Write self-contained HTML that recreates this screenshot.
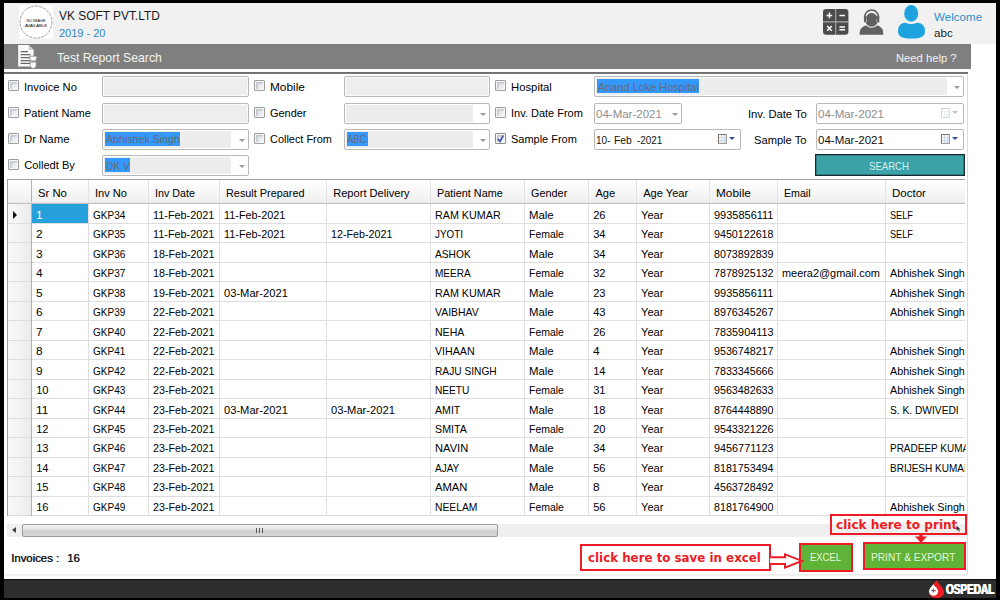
<!DOCTYPE html>
<html>
<head>
<meta charset="utf-8">
<title>Test Report Search</title>
<style>
*{box-sizing:border-box;margin:0;padding:0}
html,body{width:1000px;height:600px;overflow:hidden;background:#000}
body{position:relative;font-family:"Liberation Sans",sans-serif;font-size:12px;color:#111}
body div,body svg{position:absolute}
#win{left:4px;top:3px;width:992px;height:576px;background:#fff}
#hdr{left:4px;top:3px;width:992px;height:41px;background:#f1f1f1}
#logo{left:19px;top:5px;width:34px;height:34px;background:#fff}
#bar{left:4px;top:44px;width:967px;height:25px;background:#7f7f7f}
#barline{left:4px;top:72px;width:964px;height:2px;background:linear-gradient(#6c6c6c,#7c7c7c)}
#panelR{left:967px;top:74px;width:1px;height:501px;background:#dcdcdc}
#panelB{left:4px;top:574px;width:964px;height:2px;background:linear-gradient(#e9e9e9,#f6f6f6)}
.cb{width:11px;height:11px;border:1px solid #9d9d9d;border-radius:1px;background:linear-gradient(135deg,#d2d4d9 10%,#f4f4f4 80%);box-shadow:inset 0 0 0 1px #f6f6f6, inset 1.5px 1.5px 0 1px #c4c8d0}
.cb.chk{border-color:#8c8c8c;background:linear-gradient(135deg,#dcdde2,#f6f6f6)}
.t{white-space:pre;color:#000}
.inp{height:21px;border:1px solid #b9b9b9;border-radius:2px;background:#fff;font-size:12px;white-space:nowrap;overflow:hidden}
.inp.dis{background:#eeeeee;box-shadow:inset 0 0 0 1px #fafafa}
.inp .fill{left:1px;top:1px;bottom:1px;background:#ededed}
.inp .sel{left:2px;top:1.5px;height:14.5px;background:#3399ff}
.inp .arrow{right:3.5px;top:8.5px;width:0;height:0;border-left:3px solid transparent;border-right:3px solid transparent;border-top:3.5px solid #9a9a9a}
.inp .txt{left:3px;top:1px;line-height:18px}
.inp .txt.g{color:#8a8a8a}
#search{left:815px;top:154px;width:150px;height:21.5px;background:#3ba3a8;border:1px solid #18282c;box-shadow:inset 0 0 0 0.5px #245a60}
/* grid */
.gh{background:linear-gradient(#ffffff,#f7f7f7 50%,#efefef)}
.rh{background:linear-gradient(90deg,#f9f9f9,#ececec)}
.selc{background:#26a0da}
.ht{color:#000}
.hs{width:1px;background:#e2e2e2}
.hl{height:1px;background:#c2c2c2;box-shadow:0 -1px 0 #e6e6e6}
.rl{height:1px;background:#dedede}
.vl{width:1px;background:#dedede}
.vl.first{background:#b2b2b2}
.hs.first{background:#b2b2b2}
.ct{color:#000}
.ct.sel{color:#fff}
.mark{width:0;height:0;border-top:4px solid transparent;border-bottom:4px solid transparent;border-left:4px solid #111}
.gb{background:#a0a0a0}
/* bottom */
#sbar{left:7px;top:524px;width:958px;height:13px;background:#efefef}
#sthumb{left:22px;top:524px;width:476px;height:13px;border:1px solid #9c9c9c;border-radius:2px;background:linear-gradient(#f1f1f1,#e3e3e3 46%,#cccccc 54%,#d8d8d8)}
#sgrip{left:256px;top:528px;width:7px;height:5px;background:repeating-linear-gradient(90deg,#555 0,#555 1px,transparent 1px,transparent 3px)}
#sarrow{left:12px;top:527px;width:0;height:0;border-top:3px solid transparent;border-bottom:3px solid transparent;border-right:4px solid #444}
.rbox{border:2.5px solid #ee1c25}
.gbtn{background:#5fb336;border:2.5px solid #ee1c25}
#foot{left:4px;top:579px;width:992px;height:19px;background:#2d2d2d;border-top:1px solid #0c0c0c}
#osp{left:946px;top:580px;font-size:14.6px;line-height:18px;font-weight:bold;color:#fff;white-space:nowrap;transform-origin:0 0;transform:scaleX(0.685);text-shadow:0.6px 0 0 #fff,-0.6px 0 0 #fff}
.cal{right:13px;top:3.6px;width:9.5px;height:10px;border:1px solid #7a726e;border-right-color:#a09a98;border-bottom-color:#a09a98;border-radius:1px;background:linear-gradient(90deg,transparent 2.4px,#d0d9e6 2.4px,#d0d9e6 3.2px,transparent 3.2px,transparent 5px,#d0d9e6 5px,#d0d9e6 5.8px,transparent 5.8px),linear-gradient(180deg,transparent 2.2px,#d0d9e6 2.2px,#d0d9e6 3px,transparent 3px,transparent 5px,#d0d9e6 5px,#d0d9e6 5.8px,transparent 5.8px),linear-gradient(135deg,#ffffff 30%,#d4e2f4)}
.cal.dim{opacity:.32}
.inp .arrow.bl{border-top-color:#2f4c90;border-left-width:3.2px;border-right-width:3.2px;border-top-width:3.8px;top:7.2px}
.inp .arrow.lt{border-top-color:#c0c0c0;border-left-width:3.2px;border-right-width:3.2px;border-top-width:3.8px;top:7.2px}
.t{transform-origin:0 0}
</style>
</head>
<body>
<div id="win"></div>
<div id="hdr"></div>
<div id="logo"></div>
<svg id="logoc" style="left:19px;top:5px" width="34" height="34" viewBox="0 0 34 34"><circle cx="17" cy="17.1" r="16" fill="none" stroke="#555" stroke-width="0.55" stroke-dasharray="3.2 0.9"/><text x="17" y="17.2" font-family="Liberation Sans, sans-serif" font-size="3.8" text-anchor="middle" fill="#000" textLength="19" lengthAdjust="spacingAndGlyphs">NO IMAGE</text><text x="17" y="21.6" font-family="Liberation Sans, sans-serif" font-size="3.8" text-anchor="middle" fill="#000" textLength="22" lengthAdjust="spacingAndGlyphs">AVAILABLE</text></svg>
<svg id="calc" style="left:823px;top:9px" width="26" height="26" viewBox="0 0 26 26"><rect x="0" y="0" width="25.4" height="25.8" rx="3.2" fill="#4b4b4b"/><path d="M12.7 0 V25.8 M0 12.9 H25.4" stroke="#a9a9a9" stroke-width="1.1"/><path d="M3.6 6.4 H9.2 M6.4 3.6 V9.2 M16.4 6.4 H22 M4.1 16.9 L8.7 21.7 M8.7 16.9 L4.1 21.7 M16.4 17.9 H22 M16.4 20.7 H22" stroke="#fff" stroke-width="1.5" fill="none"/></svg>
<svg id="headset" style="left:858px;top:8px" width="28" height="28" viewBox="0 0 28 28"><path d="M1.5 26.7 Q1.2 19.4 8.6 17.1 L11 16 H16.4 L18.8 17.1 Q25.8 19.4 25.3 26.7 Z" fill="#5f6160"/><path d="M6.9 12.6 A6.7 6.7 0 0 0 20.3 12.6 Z" fill="#5f6160" stroke="#f1f1f1" stroke-width="1.1"/><ellipse cx="13.6" cy="10" rx="5.5" ry="5.6" fill="#5f6160"/><path d="M8.6 7.6 A5.5 5.5 0 0 1 18.6 7.6" fill="none" stroke="#f1f1f1" stroke-width="0.9"/><path d="M7.1 11 A6.85 6.85 0 1 1 20.1 11" fill="none" stroke="#5f6160" stroke-width="1.5"/><rect x="5.9" y="7.6" width="2.1" height="6.6" rx="1" fill="#5f6160"/><rect x="19.1" y="7.6" width="2.2" height="6.8" rx="1" fill="#5f6160"/></svg>
<svg id="user" style="left:897px;top:4px" width="30" height="36" viewBox="0 0 30 36"><ellipse cx="14.2" cy="9.4" rx="7" ry="8.4" fill="#1fa3df"/><path d="M1 27.4 Q1 19 8.6 18.8 Q14.2 21.4 19.8 18.8 Q28 19 28 27.4 Q28 34.6 14.4 34.6 Q1 34.6 1 27.4 Z" fill="#1fa3df"/></svg>
<div class="t" style="left:59.3px;top:8.67px;font-size:12.2px;line-height:15px;transform:scaleX(0.9770);color:#1a1a1a;">VK SOFT PVT.LTD</div>
<div class="t" style="left:58.9px;top:26.16px;font-size:10.8px;line-height:14px;transform:scaleX(1.0189);color:#2e86c1;">2019 - 20</div>
<div class="t" style="left:934.3px;top:10.15px;font-size:11.1px;line-height:14px;transform:scaleX(1.0443);color:#2f8fc8;">Welcome</div>
<div class="t" style="left:934.3px;top:25.75px;font-size:11.1px;line-height:14px;transform:scaleX(1.0449);color:#222;">abc</div>
<div id="bar"></div>
<svg id="docico" style="left:17px;top:44px" width="22" height="26" viewBox="0 0 22 26"><path d="M1.2 1 H11.6 L16.6 6 V22.6 H1.2 Z" fill="#fafafa"/><path d="M11.6 1 V6 H16.6 Z" fill="#cfcfcf"/><path d="M3.6 7.6 H11 M3.6 10.6 H13.6 M3.6 13.6 H13.6 M3.6 16.6 H13.6 M3.6 19.4 H13.6" stroke="#6a6a6a" stroke-width="1.3"/><path d="M12.4 12.2 H20 V14.2 H19.2 V21.2 Q19.2 24.4 16.2 24.4 Q13.2 24.4 13.2 21.2 V14.2 H12.4 Z" fill="#fafafa" stroke="#7f7f7f" stroke-width="0.7"/><rect x="13.4" y="16.4" width="5.6" height="2.2" fill="#9a9a9a"/></svg>
<div class="t" style="left:57.3px;top:49.63px;font-size:12.6px;line-height:16px;transform:scaleX(0.9726);color:#f4f4f4;">Test Report Search</div>
<div class="t" style="left:896.3px;top:50.95px;font-size:11.1px;line-height:14px;transform:scaleX(1.0106);color:#f4f4f4;">Need help ?</div>
<div id="barline"></div>
<div id="panelR"></div>
<div id="panelB"></div>

<!-- filter col 1 -->
<div class="cb" style="left:8px;top:80px"></div><div class="t" style="left:24.3px;top:80.15px;font-size:11.1px;line-height:14px;transform:scaleX(1.0087);">Invoice No</div>
<div class="inp dis" style="left:102px;top:76px;width:147px"></div>
<div class="cb" style="left:8px;top:107px"></div><div class="t" style="left:24.3px;top:106.15px;font-size:11.1px;line-height:14px;transform:scaleX(0.9948);">Patient Name</div>
<div class="inp dis" style="left:102px;top:103px;width:147px"></div>
<div class="cb" style="left:8px;top:133px"></div><div class="t" style="left:24.3px;top:132.15px;font-size:11.1px;line-height:14px;transform:scaleX(1.0246);">Dr Name</div>
<div class="inp" style="left:102px;top:129px;width:147px"><div class="fill" style="width:127px"></div><div class="sel" style="width:75px"></div><div class="arrow"></div></div>
<div class="t" style="left:106.3px;top:132.15px;font-size:11.1px;line-height:14px;transform:scaleX(0.9580);color:#666a72;">Abhishek Singh</div>
<div class="cb" style="left:8px;top:159px"></div><div class="t" style="left:24.3px;top:158.15px;font-size:11.1px;line-height:14px;">Colledt By</div>
<div class="inp" style="left:102px;top:155px;width:147px"><div class="fill" style="width:127px"></div><div class="sel" style="width:25px"></div><div class="arrow"></div></div>
<div class="t" style="left:106.3px;top:158.55px;font-size:11.1px;line-height:14px;transform:scaleX(0.9225);color:#666a72;">DK V</div>

<!-- filter col 2 -->
<div class="cb" style="left:254px;top:80px"></div><div class="t" style="left:270.3px;top:80.15px;font-size:11.1px;line-height:14px;transform:scaleX(1.0673);">Mobile</div>
<div class="inp dis" style="left:344px;top:76px;width:146px"></div>
<div class="cb" style="left:254px;top:107px"></div><div class="t" style="left:270.3px;top:106.15px;font-size:11.1px;line-height:14px;transform:scaleX(0.9859);">Gender</div>
<div class="inp" style="left:344px;top:103px;width:146px"><div class="fill" style="width:127px"></div><div class="arrow"></div></div>
<div class="cb" style="left:254px;top:133px"></div><div class="t" style="left:270.3px;top:132.15px;font-size:11.1px;line-height:14px;transform:scaleX(0.9840);">Collect From</div>
<div class="inp" style="left:344px;top:129px;width:146px"><div class="fill" style="width:127px"></div><div class="sel" style="width:21px"></div><div class="arrow"></div></div>
<div class="t" style="left:347.3px;top:132.15px;font-size:11.1px;line-height:14px;transform:scaleX(0.8456);color:#666a72;">ABC</div>

<!-- filter col 3 -->
<div class="cb" style="left:495px;top:80px"></div><div class="t" style="left:511.3px;top:80.15px;font-size:11.1px;line-height:14px;transform:scaleX(1.0199);">Hospital</div>
<div class="inp" style="left:594px;top:76px;width:370px"><div class="fill" style="width:351px"></div><div class="sel" style="width:102px"></div><div class="arrow"></div></div>
<div class="t" style="left:598.3px;top:80.15px;font-size:11.1px;line-height:14px;transform:scaleX(0.9850);color:#666a72;">Anand Loke Hospital</div>
<div class="cb" style="left:495px;top:107px"></div><div class="t" style="left:511.3px;top:106.15px;font-size:11.1px;line-height:14px;transform:scaleX(0.9907);">Inv. Date From</div>
<div class="inp" style="left:594px;top:103px;width:88px"><div class="arrow" style="right:3px"></div></div>
<div class="t" style="left:596.3px;top:107.15px;font-size:11.1px;line-height:14px;transform:scaleX(1.0370);color:#8c8c8c;">04-Mar-2021</div>
<div class="t" style="left:748.3px;top:107.15px;font-size:11.1px;line-height:14px;transform:scaleX(1.0119);">Inv. Date To</div>
<div class="inp" style="left:816px;top:103px;width:148px"><div class="cal dim"></div><div class="arrow lt" style="right:5px"></div></div>
<div class="t" style="left:818.3px;top:107.15px;font-size:11.1px;line-height:14px;transform:scaleX(1.0370);color:#8c8c8c;">04-Mar-2021</div>
<div class="cb chk" style="left:495px;top:133px"></div><svg style="left:495px;top:133px" width="12" height="12" viewBox="0 0 12 12"><path d="M2.8 6 L5 8.4 L8.3 2.5" fill="none" stroke="#3a55a8" stroke-width="1.7"/></svg><div class="t" style="left:511.3px;top:132.15px;font-size:11.1px;line-height:14px;transform:scaleX(0.9892);">Sample From</div>
<div class="inp" style="left:594px;top:129px;width:147px"><div class="cal"></div><div class="arrow bl" style="right:5px"></div></div>
<div class="t" style="left:596.3px;top:133.15px;font-size:11.1px;line-height:14px;transform:scaleX(0.9038);color:#111;">10-</div><div class="t" style="left:614.3px;top:133.15px;font-size:11.1px;line-height:14px;transform:scaleX(0.9358);color:#111;">Feb</div><div class="t" style="left:636.8px;top:133.15px;font-size:11.1px;line-height:14px;transform:scaleX(0.8947);color:#111;">-2021</div>
<div class="t" style="left:754.3px;top:133.15px;font-size:11.1px;line-height:14px;transform:scaleX(1.0049);">Sample To</div>
<div class="inp" style="left:816px;top:129px;width:148px"><div class="cal"></div><div class="arrow bl" style="right:5px"></div></div>
<div class="t" style="left:818.3px;top:133.15px;font-size:11.1px;line-height:14px;transform:scaleX(1.0370);color:#111;">04-Mar-2021</div>
<div id="search"></div>
<div class="t" style="left:869.3px;top:158.75px;font-size:11.1px;line-height:14px;transform:scaleX(0.8625);color:#d6eeee;">SEARCH</div>
<div id="grid">
<div class="gh" style="left:8px;top:180px;width:957px;height:23px"></div>
<div class="rh" style="left:8px;top:203px;width:23px;height:312px"></div>
<div class="selc" style="left:32px;top:204px;width:56px;height:19px"></div>
<div class="t ht" style="left:38.4px;top:186.15px;font-size:11.1px;line-height:14px;transform:scaleX(1.0185);">Sr No</div>
<div class="t ht" style="left:94.9px;top:186.15px;font-size:11.1px;line-height:14px;">Inv No</div>
<div class="t ht" style="left:155.2px;top:186.15px;font-size:11.1px;line-height:14px;transform:scaleX(0.9652);">Inv Date</div>
<div class="t ht" style="left:226.2px;top:186.15px;font-size:11.1px;line-height:14px;transform:scaleX(0.9787);">Result Prepared</div>
<div class="t ht" style="left:333.2px;top:186.15px;font-size:11.1px;line-height:14px;">Report Delivery</div>
<div class="t ht" style="left:437.2px;top:186.15px;font-size:11.1px;line-height:14px;transform:scaleX(0.9799);">Patient Name</div>
<div class="t ht" style="left:531.2px;top:186.15px;font-size:11.1px;line-height:14px;transform:scaleX(0.9805);">Gender</div>
<div class="t ht" style="left:595.4px;top:186.15px;font-size:11.1px;line-height:14px;">Age</div>
<div class="t ht" style="left:643.2px;top:186.15px;font-size:11.1px;line-height:14px;">Age Year</div>
<div class="t ht" style="left:715.8px;top:186.15px;font-size:11.1px;line-height:14px;transform:scaleX(1.0673);">Mobile</div>
<div class="t ht" style="left:784.4px;top:186.15px;font-size:11.1px;line-height:14px;transform:scaleX(0.9547);">Email</div>
<div class="t ht" style="left:892.4px;top:186.15px;font-size:11.1px;line-height:14px;transform:scaleX(1.0369);">Doctor</div>
<div class="hs first" style="left:31px;top:180px;height:23px"></div>
<div class="hs" style="left:88px;top:180px;height:23px"></div>
<div class="hs" style="left:148px;top:180px;height:23px"></div>
<div class="hs" style="left:219px;top:180px;height:23px"></div>
<div class="hs" style="left:326px;top:180px;height:23px"></div>
<div class="hs" style="left:430px;top:180px;height:23px"></div>
<div class="hs" style="left:524px;top:180px;height:23px"></div>
<div class="hs" style="left:588px;top:180px;height:23px"></div>
<div class="hs" style="left:636px;top:180px;height:23px"></div>
<div class="hs" style="left:709px;top:180px;height:23px"></div>
<div class="hs" style="left:777px;top:180px;height:23px"></div>
<div class="hs" style="left:885px;top:180px;height:23px"></div>
<div class="hl" style="left:8px;top:203px;width:957px"></div>
<div class="rl" style="left:8px;top:223px;width:957px"></div>
<div class="t ct sel" style="left:36.2px;top:208.15px;font-size:11.1px;line-height:14px;transform:scaleX(1.0689);">1</div>
<div class="t ct" style="left:93px;top:208.15px;font-size:11.1px;line-height:14px;transform:scaleX(0.9025);">GKP34</div>
<div class="t ct" style="left:153px;top:208.15px;font-size:11.1px;line-height:14px;transform:scaleX(0.9787);">11-Feb-2021</div>
<div class="t ct" style="left:224px;top:208.15px;font-size:11.1px;line-height:14px;transform:scaleX(0.9787);">11-Feb-2021</div>
<div class="t ct" style="left:435px;top:208.15px;font-size:11.1px;line-height:14px;transform:scaleX(0.9685);">RAM KUMAR</div>
<div class="t ct" style="left:529px;top:208.15px;font-size:11.1px;line-height:14px;transform:scaleX(1.0266);">Male</div>
<div class="t ct" style="left:593.2px;top:208.15px;font-size:11.1px;line-height:14px;">26</div>
<div class="t ct" style="left:641px;top:208.15px;font-size:11.1px;line-height:14px;">Year</div>
<div class="t ct" style="left:713.6px;top:208.15px;font-size:11.1px;line-height:14px;transform:scaleX(0.9903);">9935856111</div>
<div class="t ct" style="left:890.2px;top:208.15px;font-size:11.1px;line-height:14px;transform:scaleX(0.8249);width:91.0px;overflow:hidden;">SELF</div>
<div class="rl" style="left:8px;top:242px;width:957px"></div>
<div class="t ct" style="left:36.2px;top:227.15px;font-size:11.1px;line-height:14px;transform:scaleX(1.0689);">2</div>
<div class="t ct" style="left:93px;top:227.15px;font-size:11.1px;line-height:14px;transform:scaleX(0.9025);">GKP35</div>
<div class="t ct" style="left:153px;top:227.15px;font-size:11.1px;line-height:14px;transform:scaleX(0.9787);">11-Feb-2021</div>
<div class="t ct" style="left:224px;top:227.15px;font-size:11.1px;line-height:14px;transform:scaleX(0.9787);">11-Feb-2021</div>
<div class="t ct" style="left:331px;top:227.15px;font-size:11.1px;line-height:14px;transform:scaleX(0.9660);">12-Feb-2021</div>
<div class="t ct" style="left:435px;top:227.15px;font-size:11.1px;line-height:14px;transform:scaleX(0.8870);">JYOTI</div>
<div class="t ct" style="left:529px;top:227.15px;font-size:11.1px;line-height:14px;transform:scaleX(0.9429);">Female</div>
<div class="t ct" style="left:593.2px;top:227.15px;font-size:11.1px;line-height:14px;">34</div>
<div class="t ct" style="left:641px;top:227.15px;font-size:11.1px;line-height:14px;">Year</div>
<div class="t ct" style="left:713.6px;top:227.15px;font-size:11.1px;line-height:14px;transform:scaleX(0.9638);">9450122618</div>
<div class="t ct" style="left:890.2px;top:227.15px;font-size:11.1px;line-height:14px;transform:scaleX(0.8249);width:91.0px;overflow:hidden;">SELF</div>
<div class="rl" style="left:8px;top:262px;width:957px"></div>
<div class="t ct" style="left:36.2px;top:247.15px;font-size:11.1px;line-height:14px;transform:scaleX(1.0689);">3</div>
<div class="t ct" style="left:93px;top:247.15px;font-size:11.1px;line-height:14px;transform:scaleX(0.9025);">GKP36</div>
<div class="t ct" style="left:153px;top:247.15px;font-size:11.1px;line-height:14px;transform:scaleX(0.9660);">18-Feb-2021</div>
<div class="t ct" style="left:435px;top:247.15px;font-size:11.1px;line-height:14px;transform:scaleX(0.9186);">ASHOK</div>
<div class="t ct" style="left:529px;top:247.15px;font-size:11.1px;line-height:14px;transform:scaleX(1.0266);">Male</div>
<div class="t ct" style="left:593.2px;top:247.15px;font-size:11.1px;line-height:14px;">34</div>
<div class="t ct" style="left:641px;top:247.15px;font-size:11.1px;line-height:14px;">Year</div>
<div class="t ct" style="left:713.6px;top:247.15px;font-size:11.1px;line-height:14px;transform:scaleX(0.9638);">8073892839</div>
<div class="rl" style="left:8px;top:281px;width:957px"></div>
<div class="t ct" style="left:36.2px;top:266.15px;font-size:11.1px;line-height:14px;transform:scaleX(1.0689);">4</div>
<div class="t ct" style="left:93px;top:266.15px;font-size:11.1px;line-height:14px;transform:scaleX(0.9025);">GKP37</div>
<div class="t ct" style="left:153px;top:266.15px;font-size:11.1px;line-height:14px;transform:scaleX(0.9660);">18-Feb-2021</div>
<div class="t ct" style="left:435px;top:266.15px;font-size:11.1px;line-height:14px;transform:scaleX(0.9044);">MEERA</div>
<div class="t ct" style="left:529px;top:266.15px;font-size:11.1px;line-height:14px;transform:scaleX(0.9429);">Female</div>
<div class="t ct" style="left:593.2px;top:266.15px;font-size:11.1px;line-height:14px;">32</div>
<div class="t ct" style="left:641px;top:266.15px;font-size:11.1px;line-height:14px;">Year</div>
<div class="t ct" style="left:713.6px;top:266.15px;font-size:11.1px;line-height:14px;transform:scaleX(0.9638);">7878925132</div>
<div class="t ct" style="left:782.2px;top:266.15px;font-size:11.1px;line-height:14px;transform:scaleX(0.9841);">meera2@gmail.com</div>
<div class="t ct" style="left:890.2px;top:266.15px;font-size:11.1px;line-height:14px;transform:scaleX(0.9710);width:77.3px;overflow:hidden;">Abhishek Singh</div>
<div class="rl" style="left:8px;top:301px;width:957px"></div>
<div class="t ct" style="left:36.2px;top:286.15px;font-size:11.1px;line-height:14px;transform:scaleX(1.0689);">5</div>
<div class="t ct" style="left:93px;top:286.15px;font-size:11.1px;line-height:14px;transform:scaleX(0.9025);">GKP38</div>
<div class="t ct" style="left:153px;top:286.15px;font-size:11.1px;line-height:14px;transform:scaleX(0.9660);">19-Feb-2021</div>
<div class="t ct" style="left:224px;top:286.15px;font-size:11.1px;line-height:14px;transform:scaleX(1.0055);">03-Mar-2021</div>
<div class="t ct" style="left:435px;top:286.15px;font-size:11.1px;line-height:14px;transform:scaleX(0.9685);">RAM KUMAR</div>
<div class="t ct" style="left:529px;top:286.15px;font-size:11.1px;line-height:14px;transform:scaleX(1.0266);">Male</div>
<div class="t ct" style="left:593.2px;top:286.15px;font-size:11.1px;line-height:14px;">23</div>
<div class="t ct" style="left:641px;top:286.15px;font-size:11.1px;line-height:14px;">Year</div>
<div class="t ct" style="left:713.6px;top:286.15px;font-size:11.1px;line-height:14px;transform:scaleX(0.9903);">9935856111</div>
<div class="t ct" style="left:890.2px;top:286.15px;font-size:11.1px;line-height:14px;transform:scaleX(0.9710);width:77.3px;overflow:hidden;">Abhishek Singh</div>
<div class="rl" style="left:8px;top:320px;width:957px"></div>
<div class="t ct" style="left:36.2px;top:305.15px;font-size:11.1px;line-height:14px;transform:scaleX(1.0689);">6</div>
<div class="t ct" style="left:93px;top:305.15px;font-size:11.1px;line-height:14px;transform:scaleX(0.9025);">GKP39</div>
<div class="t ct" style="left:153px;top:305.15px;font-size:11.1px;line-height:14px;transform:scaleX(0.9660);">22-Feb-2021</div>
<div class="t ct" style="left:435px;top:305.15px;font-size:11.1px;line-height:14px;transform:scaleX(0.9404);">VAIBHAV</div>
<div class="t ct" style="left:529px;top:305.15px;font-size:11.1px;line-height:14px;transform:scaleX(1.0266);">Male</div>
<div class="t ct" style="left:593.2px;top:305.15px;font-size:11.1px;line-height:14px;">43</div>
<div class="t ct" style="left:641px;top:305.15px;font-size:11.1px;line-height:14px;">Year</div>
<div class="t ct" style="left:713.6px;top:305.15px;font-size:11.1px;line-height:14px;transform:scaleX(0.9638);">8976345267</div>
<div class="t ct" style="left:890.2px;top:305.15px;font-size:11.1px;line-height:14px;transform:scaleX(0.9710);width:77.3px;overflow:hidden;">Abhishek Singh</div>
<div class="rl" style="left:8px;top:340px;width:957px"></div>
<div class="t ct" style="left:36.2px;top:325.15px;font-size:11.1px;line-height:14px;transform:scaleX(1.0689);">7</div>
<div class="t ct" style="left:93px;top:325.15px;font-size:11.1px;line-height:14px;transform:scaleX(0.9025);">GKP40</div>
<div class="t ct" style="left:153px;top:325.15px;font-size:11.1px;line-height:14px;transform:scaleX(0.9660);">22-Feb-2021</div>
<div class="t ct" style="left:435px;top:325.15px;font-size:11.1px;line-height:14px;transform:scaleX(0.9500);">NEHA</div>
<div class="t ct" style="left:529px;top:325.15px;font-size:11.1px;line-height:14px;transform:scaleX(0.9429);">Female</div>
<div class="t ct" style="left:593.2px;top:325.15px;font-size:11.1px;line-height:14px;">26</div>
<div class="t ct" style="left:641px;top:325.15px;font-size:11.1px;line-height:14px;">Year</div>
<div class="t ct" style="left:713.6px;top:325.15px;font-size:11.1px;line-height:14px;transform:scaleX(0.9769);">7835904113</div>
<div class="rl" style="left:8px;top:359px;width:957px"></div>
<div class="t ct" style="left:36.2px;top:344.15px;font-size:11.1px;line-height:14px;transform:scaleX(1.0689);">8</div>
<div class="t ct" style="left:93px;top:344.15px;font-size:11.1px;line-height:14px;transform:scaleX(0.9025);">GKP41</div>
<div class="t ct" style="left:153px;top:344.15px;font-size:11.1px;line-height:14px;transform:scaleX(0.9660);">22-Feb-2021</div>
<div class="t ct" style="left:435px;top:344.15px;font-size:11.1px;line-height:14px;transform:scaleX(0.9606);">VIHAAN</div>
<div class="t ct" style="left:529px;top:344.15px;font-size:11.1px;line-height:14px;transform:scaleX(1.0266);">Male</div>
<div class="t ct" style="left:593.2px;top:344.15px;font-size:11.1px;line-height:14px;transform:scaleX(1.0689);">4</div>
<div class="t ct" style="left:641px;top:344.15px;font-size:11.1px;line-height:14px;">Year</div>
<div class="t ct" style="left:713.6px;top:344.15px;font-size:11.1px;line-height:14px;transform:scaleX(0.9638);">9536748217</div>
<div class="t ct" style="left:890.2px;top:344.15px;font-size:11.1px;line-height:14px;transform:scaleX(0.9710);width:77.3px;overflow:hidden;">Abhishek Singh</div>
<div class="rl" style="left:8px;top:379px;width:957px"></div>
<div class="t ct" style="left:36.2px;top:364.15px;font-size:11.1px;line-height:14px;transform:scaleX(1.0689);">9</div>
<div class="t ct" style="left:93px;top:364.15px;font-size:11.1px;line-height:14px;transform:scaleX(0.9025);">GKP42</div>
<div class="t ct" style="left:153px;top:364.15px;font-size:11.1px;line-height:14px;transform:scaleX(0.9660);">22-Feb-2021</div>
<div class="t ct" style="left:435px;top:364.15px;font-size:11.1px;line-height:14px;transform:scaleX(0.9178);">RAJU SINGH</div>
<div class="t ct" style="left:529px;top:364.15px;font-size:11.1px;line-height:14px;transform:scaleX(1.0266);">Male</div>
<div class="t ct" style="left:593.2px;top:364.15px;font-size:11.1px;line-height:14px;">14</div>
<div class="t ct" style="left:641px;top:364.15px;font-size:11.1px;line-height:14px;">Year</div>
<div class="t ct" style="left:713.6px;top:364.15px;font-size:11.1px;line-height:14px;transform:scaleX(0.9638);">7833345666</div>
<div class="t ct" style="left:890.2px;top:364.15px;font-size:11.1px;line-height:14px;transform:scaleX(0.9710);width:77.3px;overflow:hidden;">Abhishek Singh</div>
<div class="rl" style="left:8px;top:398px;width:957px"></div>
<div class="t ct" style="left:36.2px;top:383.15px;font-size:11.1px;line-height:14px;">10</div>
<div class="t ct" style="left:93px;top:383.15px;font-size:11.1px;line-height:14px;transform:scaleX(0.9025);">GKP43</div>
<div class="t ct" style="left:153px;top:383.15px;font-size:11.1px;line-height:14px;transform:scaleX(0.9660);">23-Feb-2021</div>
<div class="t ct" style="left:435px;top:383.15px;font-size:11.1px;line-height:14px;transform:scaleX(0.9117);">NEETU</div>
<div class="t ct" style="left:529px;top:383.15px;font-size:11.1px;line-height:14px;transform:scaleX(0.9429);">Female</div>
<div class="t ct" style="left:593.2px;top:383.15px;font-size:11.1px;line-height:14px;">31</div>
<div class="t ct" style="left:641px;top:383.15px;font-size:11.1px;line-height:14px;">Year</div>
<div class="t ct" style="left:713.6px;top:383.15px;font-size:11.1px;line-height:14px;transform:scaleX(0.9638);">9563482633</div>
<div class="t ct" style="left:890.2px;top:383.15px;font-size:11.1px;line-height:14px;transform:scaleX(0.9710);width:77.3px;overflow:hidden;">Abhishek Singh</div>
<div class="rl" style="left:8px;top:418px;width:957px"></div>
<div class="t ct" style="left:36.2px;top:403.15px;font-size:11.1px;line-height:14px;transform:scaleX(1.0674);">11</div>
<div class="t ct" style="left:93px;top:403.15px;font-size:11.1px;line-height:14px;transform:scaleX(0.9025);">GKP44</div>
<div class="t ct" style="left:153px;top:403.15px;font-size:11.1px;line-height:14px;transform:scaleX(0.9660);">23-Feb-2021</div>
<div class="t ct" style="left:224px;top:403.15px;font-size:11.1px;line-height:14px;transform:scaleX(1.0055);">03-Mar-2021</div>
<div class="t ct" style="left:331px;top:403.15px;font-size:11.1px;line-height:14px;transform:scaleX(1.0055);">03-Mar-2021</div>
<div class="t ct" style="left:435px;top:403.15px;font-size:11.1px;line-height:14px;transform:scaleX(0.9542);">AMIT</div>
<div class="t ct" style="left:529px;top:403.15px;font-size:11.1px;line-height:14px;transform:scaleX(1.0266);">Male</div>
<div class="t ct" style="left:593.2px;top:403.15px;font-size:11.1px;line-height:14px;">18</div>
<div class="t ct" style="left:641px;top:403.15px;font-size:11.1px;line-height:14px;">Year</div>
<div class="t ct" style="left:713.6px;top:403.15px;font-size:11.1px;line-height:14px;transform:scaleX(0.9638);">8764448890</div>
<div class="t ct" style="left:890.2px;top:403.15px;font-size:11.1px;line-height:14px;transform:scaleX(0.9206);width:81.6px;overflow:hidden;">S. K. DWIVEDI</div>
<div class="rl" style="left:8px;top:437px;width:957px"></div>
<div class="t ct" style="left:36.2px;top:422.15px;font-size:11.1px;line-height:14px;">12</div>
<div class="t ct" style="left:93px;top:422.15px;font-size:11.1px;line-height:14px;transform:scaleX(0.9025);">GKP45</div>
<div class="t ct" style="left:153px;top:422.15px;font-size:11.1px;line-height:14px;transform:scaleX(0.9660);">23-Feb-2021</div>
<div class="t ct" style="left:435px;top:422.15px;font-size:11.1px;line-height:14px;transform:scaleX(0.9639);">SMITA</div>
<div class="t ct" style="left:529px;top:422.15px;font-size:11.1px;line-height:14px;transform:scaleX(0.9429);">Female</div>
<div class="t ct" style="left:593.2px;top:422.15px;font-size:11.1px;line-height:14px;">20</div>
<div class="t ct" style="left:641px;top:422.15px;font-size:11.1px;line-height:14px;">Year</div>
<div class="t ct" style="left:713.6px;top:422.15px;font-size:11.1px;line-height:14px;transform:scaleX(0.9638);">9543321226</div>
<div class="rl" style="left:8px;top:457px;width:957px"></div>
<div class="t ct" style="left:36.2px;top:441.15px;font-size:11.1px;line-height:14px;">13</div>
<div class="t ct" style="left:93px;top:441.15px;font-size:11.1px;line-height:14px;transform:scaleX(0.9025);">GKP46</div>
<div class="t ct" style="left:153px;top:441.15px;font-size:11.1px;line-height:14px;transform:scaleX(0.9660);">23-Feb-2021</div>
<div class="t ct" style="left:435px;top:441.15px;font-size:11.1px;line-height:14px;transform:scaleX(1.0060);">NAVIN</div>
<div class="t ct" style="left:529px;top:441.15px;font-size:11.1px;line-height:14px;transform:scaleX(1.0266);">Male</div>
<div class="t ct" style="left:593.2px;top:441.15px;font-size:11.1px;line-height:14px;">34</div>
<div class="t ct" style="left:641px;top:441.15px;font-size:11.1px;line-height:14px;">Year</div>
<div class="t ct" style="left:713.6px;top:441.15px;font-size:11.1px;line-height:14px;transform:scaleX(0.9769);">9456771123</div>
<div class="t ct" style="left:890.2px;top:441.15px;font-size:11.1px;line-height:14px;transform:scaleX(0.8998);width:83.5px;overflow:hidden;">PRADEEP KUMAR</div>
<div class="rl" style="left:8px;top:476px;width:957px"></div>
<div class="t ct" style="left:36.2px;top:461.15px;font-size:11.1px;line-height:14px;">14</div>
<div class="t ct" style="left:93px;top:461.15px;font-size:11.1px;line-height:14px;transform:scaleX(0.9025);">GKP47</div>
<div class="t ct" style="left:153px;top:461.15px;font-size:11.1px;line-height:14px;transform:scaleX(0.9660);">23-Feb-2021</div>
<div class="t ct" style="left:435px;top:461.15px;font-size:11.1px;line-height:14px;transform:scaleX(0.8983);">AJAY</div>
<div class="t ct" style="left:529px;top:461.15px;font-size:11.1px;line-height:14px;transform:scaleX(1.0266);">Male</div>
<div class="t ct" style="left:593.2px;top:461.15px;font-size:11.1px;line-height:14px;">56</div>
<div class="t ct" style="left:641px;top:461.15px;font-size:11.1px;line-height:14px;">Year</div>
<div class="t ct" style="left:713.6px;top:461.15px;font-size:11.1px;line-height:14px;transform:scaleX(0.9638);">8181753494</div>
<div class="t ct" style="left:890.2px;top:461.15px;font-size:11.1px;line-height:14px;transform:scaleX(0.9018);width:83.3px;overflow:hidden;">BRIJESH KUMAR</div>
<div class="rl" style="left:8px;top:496px;width:957px"></div>
<div class="t ct" style="left:36.2px;top:480.15px;font-size:11.1px;line-height:14px;">15</div>
<div class="t ct" style="left:93px;top:480.15px;font-size:11.1px;line-height:14px;transform:scaleX(0.9025);">GKP48</div>
<div class="t ct" style="left:153px;top:480.15px;font-size:11.1px;line-height:14px;transform:scaleX(0.9660);">23-Feb-2021</div>
<div class="t ct" style="left:435px;top:480.15px;font-size:11.1px;line-height:14px;transform:scaleX(1.0103);">AMAN</div>
<div class="t ct" style="left:529px;top:480.15px;font-size:11.1px;line-height:14px;transform:scaleX(1.0266);">Male</div>
<div class="t ct" style="left:593.2px;top:480.15px;font-size:11.1px;line-height:14px;transform:scaleX(1.0689);">8</div>
<div class="t ct" style="left:641px;top:480.15px;font-size:11.1px;line-height:14px;">Year</div>
<div class="t ct" style="left:713.6px;top:480.15px;font-size:11.1px;line-height:14px;transform:scaleX(0.9638);">4563728492</div>
<div class="rl" style="left:8px;top:515px;width:957px"></div>
<div class="t ct" style="left:36.2px;top:500.15px;font-size:11.1px;line-height:14px;">16</div>
<div class="t ct" style="left:93px;top:500.15px;font-size:11.1px;line-height:14px;transform:scaleX(0.9025);">GKP49</div>
<div class="t ct" style="left:153px;top:500.15px;font-size:11.1px;line-height:14px;transform:scaleX(0.9660);">23-Feb-2021</div>
<div class="t ct" style="left:435px;top:500.15px;font-size:11.1px;line-height:14px;transform:scaleX(0.9289);">NEELAM</div>
<div class="t ct" style="left:529px;top:500.15px;font-size:11.1px;line-height:14px;transform:scaleX(0.9429);">Female</div>
<div class="t ct" style="left:593.2px;top:500.15px;font-size:11.1px;line-height:14px;">56</div>
<div class="t ct" style="left:641px;top:500.15px;font-size:11.1px;line-height:14px;">Year</div>
<div class="t ct" style="left:713.6px;top:500.15px;font-size:11.1px;line-height:14px;transform:scaleX(0.9638);">8181764900</div>
<div class="t ct" style="left:890.2px;top:500.15px;font-size:11.1px;line-height:14px;transform:scaleX(0.9710);width:77.3px;overflow:hidden;">Abhishek Singh</div>
<div class="vl first" style="left:31px;top:204px;height:312px"></div>
<div class="vl" style="left:88px;top:204px;height:312px"></div>
<div class="vl" style="left:148px;top:204px;height:312px"></div>
<div class="vl" style="left:219px;top:204px;height:312px"></div>
<div class="vl" style="left:326px;top:204px;height:312px"></div>
<div class="vl" style="left:430px;top:204px;height:312px"></div>
<div class="vl" style="left:524px;top:204px;height:312px"></div>
<div class="vl" style="left:588px;top:204px;height:312px"></div>
<div class="vl" style="left:636px;top:204px;height:312px"></div>
<div class="vl" style="left:709px;top:204px;height:312px"></div>
<div class="vl" style="left:777px;top:204px;height:312px"></div>
<div class="vl" style="left:885px;top:204px;height:312px"></div>
<div class="mark" style="left:13px;top:211px"></div>
<div class="gb" style="left:7px;top:179px;width:958px;height:1px"></div>
<div class="gb" style="left:7px;top:179px;width:1px;height:337px"></div>
</div>
<div id="sbar"></div>
<div id="sthumb"></div>
<div id="sgrip"></div>
<div id="sarrow"></div>
<div class="t" style="left:10.8px;top:551.06px;font-size:10.8px;line-height:14px;transform:scaleX(1.0499);color:#1e1e1e;text-shadow:0.45px 0 0 #1e1e1e;">Invoices :</div>
<div class="t" style="left:67.3px;top:551.06px;font-size:10.8px;line-height:14px;transform:scaleX(1.0572);color:#1e1e1e;text-shadow:0.45px 0 0 #1e1e1e;">16</div>
<div class="rbox" style="left:830px;top:514px;width:137px;height:20.5px"></div>
<div class="t" style="left:835.8px;top:516.90px;font-size:13px;line-height:16px;font-family:'DejaVu Sans Condensed','DejaVu Sans','Liberation Sans',sans-serif;font-weight:bold;transform:scaleX(1.0330);color:#ed1c24;">click here to print</div>
<svg style="left:913px;top:533px" width="16" height="11" viewBox="0 0 16 11"><path d="M8 0 V5" stroke="#ee1c25" stroke-width="3.4"/><path d="M2 3.6 L8 10 L14 3.6 Z" fill="#ee1c25"/></svg>
<svg style="left:956px;top:525px" width="5" height="8" viewBox="0 0 5 8"><path d="M0.6 0.6 V5.8 L2 4.6 L3 6.8 L3.8 6.4 L2.9 4.3 H4.4 Z" fill="#333"/></svg>
<div class="rbox" style="left:580px;top:544px;width:191px;height:27px"></div>
<div class="t" style="left:587.7px;top:549.90px;font-size:13px;line-height:16px;font-family:'DejaVu Sans Condensed','DejaVu Sans','Liberation Sans',sans-serif;font-weight:bold;transform:scaleX(1.0130);color:#ed1c24;">click here to save in excel</div>
<div class="gbtn" style="left:799px;top:543px;width:54px;height:28.5px"></div>
<svg style="left:769px;top:551px" width="38" height="20" viewBox="0 0 38 20"><path d="M1 6.3 H16 V3.4 L33 9.9 L16 16.6 V12.9 H1" fill="#fff" stroke="#ee1c25" stroke-width="2" stroke-linejoin="miter" stroke-miterlimit="10"/></svg>
<div class="t" style="left:809.9px;top:549.95px;font-size:11.1px;line-height:14px;transform:scaleX(0.8489);color:#e8f5dc;">EXCEL</div>
<div class="gbtn" style="left:863px;top:542px;width:103px;height:28px"></div>
<div class="t" style="left:870.7px;top:550.15px;font-size:11.1px;line-height:14px;transform:scaleX(0.9163);color:#e8f5dc;">PRINT &amp; EXPORT</div>
<div id="foot"></div>
<svg id="drop" style="left:927px;top:579px" width="19" height="20" viewBox="0 0 19 20"><path d="M9.5 1.2 C11.6 4.6 17 9 17 13.2 C17 16.8 13.6 19 9.5 19 C5.4 19 2 16.8 2 13.2 C2 9 7.4 4.6 9.5 1.2 Z" fill="#ee1c24"/><path d="M6.3 5 C7.6 7.4 11.2 9.6 11.2 12.6 C11.2 15.2 9 16.8 6.6 16.8 C4.2 16.8 2 15.2 2 12.6 C2 9.6 5 7.4 6.3 5 Z" fill="#fff"/><path d="M6.4 9.6 V13.6" stroke="#e8493f" stroke-width="1.2"/><path d="M4.2 11.6 H6.4" stroke="#3a6fb8" stroke-width="1.2"/><path d="M6.4 11.6 H8.8" stroke="#ee1c24" stroke-width="1.2"/></svg>
<div id="osp">OSPEDAL</div>
</body>
</html>
